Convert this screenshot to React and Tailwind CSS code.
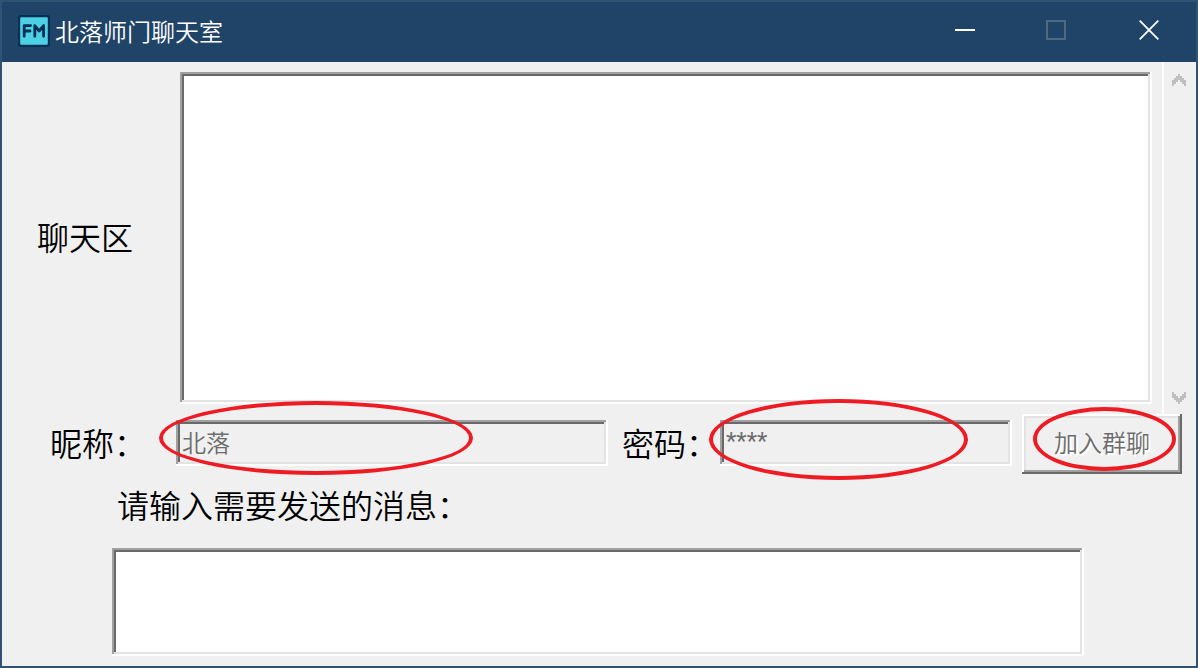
const SUNKEN =
  "shadow-[inset_-2px_-2px_#fff,inset_2px_2px_#a0a0a0,inset_-4px_-4px_#e3e3e3,inset_4px_4px_#696969]";
const RAISED =
  "shadow-[inset_-2px_-2px_#696969,inset_2px_2px_#fff,inset_-4px_-4px_#a0a0a0,inset_4px_4px_#e3e3e3]";
const CJK = "font-['Noto_Sans_CJK_SC',sans-serif]";

function Highlight({ className }) {
  return (
    <span
      aria-hidden="true"
      className={`pointer-events-none absolute z-10 rounded-[50%] border-4 border-[#ed1c24] ${className}`}
    />
  );
}

function AppIcon() {
  return (
    <svg width="32" height="32" viewBox="0 0 32 32" className="shrink-0">
      <rect width="32" height="32" rx="3" fill="#022f55" />
      <rect x="2.2" y="2.2" width="27.6" height="27.6" rx="1" fill="#4dd0e4" />
      <g fill="none" stroke="#022f55" strokeWidth="2.8" strokeLinecap="round" strokeLinejoin="round">
        <path d="M6.2 21.3V10.6H12.6M6.2 16H12" />
        <path d="M16.8 21.3V10.6L21.2 16L25.6 10.6V21.3" />
      </g>
    </svg>
  );
}

function TitleBar() {
  return (
    <header className="flex h-[60px] shrink-0 items-center bg-[#204468] pb-[2px] pl-4 text-white">
      <AppIcon />
      <h1 className="ml-[5px] text-[24px] leading-8 font-[350]">北落师门聊天室</h1>
      <div className="ml-auto flex h-full pb-[2px]">
        <button type="button" aria-label="最小化" className="flex w-[90px] items-center justify-center">
          <svg width="20" height="20" viewBox="0 0 20 20">
            <rect y="9" width="20" height="2" fill="#fff" />
          </svg>
        </button>
        <button type="button" aria-label="最大化" disabled className="flex w-[92px] items-center justify-center">
          <svg width="20" height="20" viewBox="0 0 20 20">
            <rect x="1" y="1" width="18" height="18" fill="none" stroke="#4d6986" strokeWidth="2" />
          </svg>
        </button>
        <button type="button" aria-label="关闭" className="flex w-[94px] items-center justify-center">
          <svg width="20" height="20" viewBox="0 0 20 20">
            <path d="M0.7 0.7L19.3 19.3M19.3 0.7L0.7 19.3" stroke="#fff" strokeWidth="1.8" />
          </svg>
        </button>
      </div>
    </header>
  );
}

function Chevron({ down }) {
  return (
    <svg width="14" height="12" viewBox="0 0 14 12" fill="#bfbfbf" shapeRendering="crispEdges">
      <path
        d={
          down
            ? "M0 0H2V2H4V4H6V6H8V4H10V2H12V0H14V6H12V8H10V10H8V12H6V10H4V8H2V6H0Z"
            : "M0 12H2V10H4V8H6V6H8V8H10V10H12V12H14V6H12V4H10V2H8V0H6V2H4V4H2V6H0Z"
        }
      />
    </svg>
  );
}

export default function App() {
  return (
    <div
      className={`flex min-h-screen flex-col border-2 border-[#305374] bg-[#f0f0f0] text-black ${CJK}`}
    >
      <TitleBar />
      <main className="flex flex-1 flex-col">
        <section className="flex min-h-[352px] flex-1">
          <label
            htmlFor="chat"
            className="flex w-[168px] shrink-0 items-center justify-center pr-[2px] pb-[4px] text-[32px] leading-10 font-[350]"
          >
            聊天区
          </label>
          <textarea
            id="chat"
            readOnly
            className={`m-[10px] flex-1 resize-none bg-white p-2 text-[24px] outline-none ${SUNKEN}`}
          />
          <div className="flex w-[34px] flex-col items-center justify-between border-l-2 border-white pr-[2px]">
            <button type="button" aria-label="向上滚动" className="flex h-9 w-full items-center justify-center">
              <Chevron />
            </button>
            <button type="button" aria-label="向下滚动" className="flex h-8 w-full items-center justify-center">
              <Chevron down />
            </button>
          </div>
        </section>

        <section className="flex h-[60px] items-center pr-[14px] pl-12">
          <label htmlFor="nickname" className="mr-[30px] shrink-0 pb-[4px] text-[32px] leading-10 font-[350]">
            昵称：
          </label>
          <div className="relative mb-[2px] min-w-0 flex-[432]">
            <input
              id="nickname"
              type="text"
              disabled
              defaultValue="北落"
              className={`block h-[46px] w-full bg-[#f0f0f0] px-[6px] pb-[4px] text-[24px] leading-8 font-[350] text-[#6d6d6d] ${SUNKEN}`}
            />
            <Highlight className="-top-[19px] -left-[17px] h-[74px] w-[314px]" />
          </div>
          <label htmlFor="password" className="mr-[2px] ml-[14px] shrink-0 pb-[4px] text-[32px] leading-10 font-[350]">
            密码：
          </label>
          <div className="relative mb-[2px] min-w-0 flex-[292]">
            <input
              id="password"
              type="text"
              disabled
              defaultValue="****"
              className={`block h-[46px] w-full bg-[#f0f0f0] px-[6px] pb-[4px] font-['Roboto',sans-serif] text-[24px] leading-8 text-[#6d6d6d] ${SUNKEN}`}
            />
            <Highlight className="-top-[21px] -left-[11px] h-[81px] w-[259px]" />
          </div>
          <div className="relative ml-[10px] w-40 shrink-0">
            <button
              type="button"
              disabled
              className={`block h-[60px] w-full bg-[#f0f0f0] pb-[4px] text-[24px] leading-8 font-[350] text-[#6d6d6d] text-shadow-[2px_2px_#fff] ${RAISED}`}
            >
              加入群聊
            </button>
            <Highlight className="-top-[7px] left-[11px] h-16 w-[143px]" />
          </div>
        </section>

        <section className="flex flex-col pr-[112px] pb-[10px] pl-[110px]">
          <label htmlFor="message" className="mb-[14px] pl-[5px] text-[32px] leading-[60px] font-[350]">
            请输入需要发送的消息：
          </label>
          <textarea
            id="message"
            className={`h-[108px] resize-none bg-white p-2 text-[24px] outline-none ${SUNKEN}`}
          />
        </section>
      </main>
    </div>
  );
}
